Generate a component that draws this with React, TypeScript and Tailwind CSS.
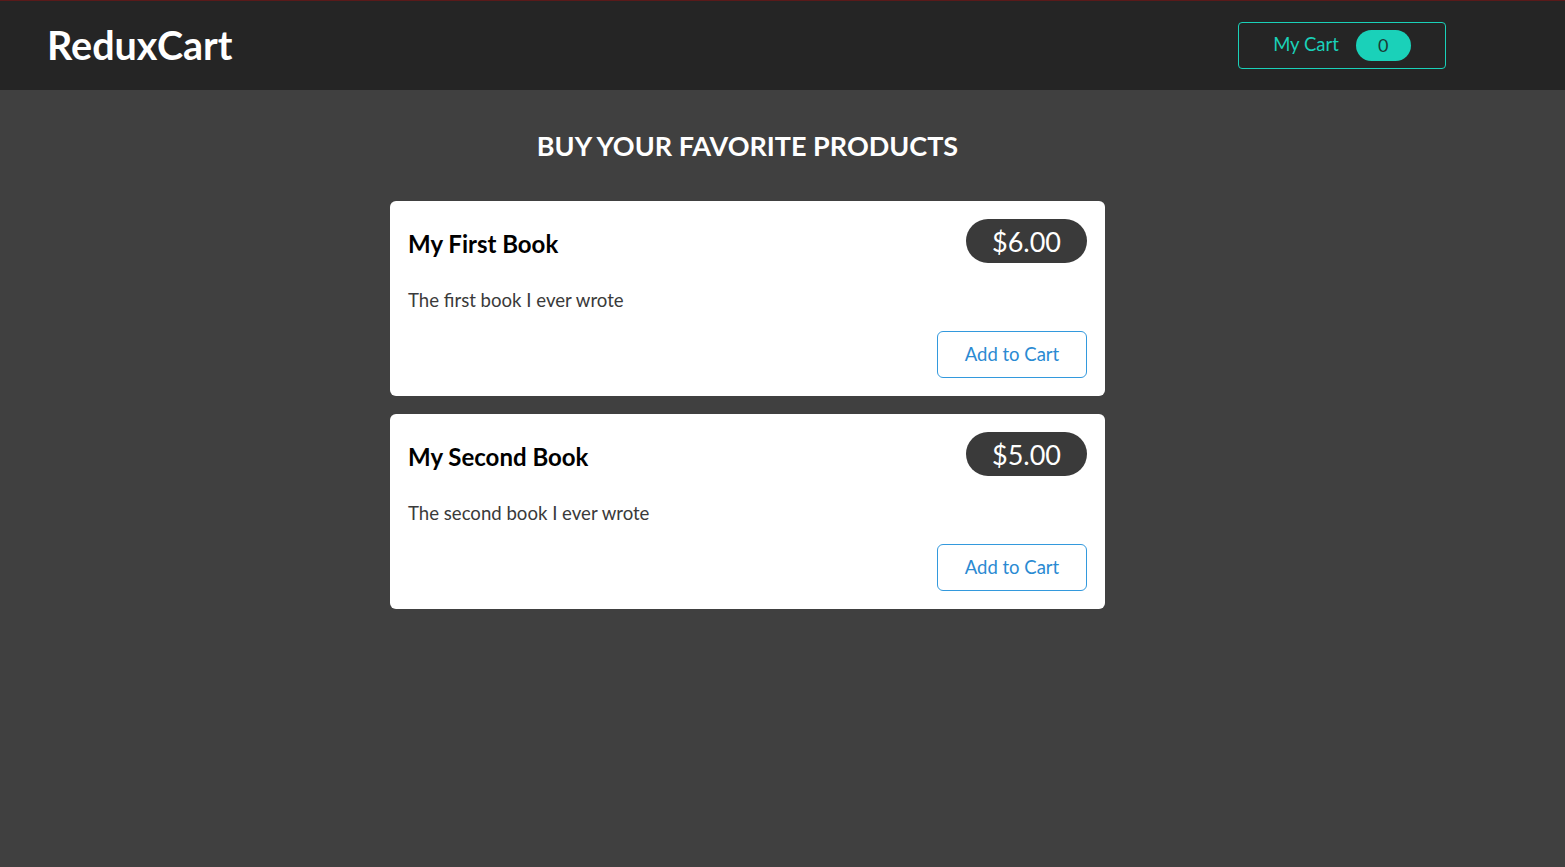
import React from "react";

type Product = {
  id: string;
  title: string;
  price: number;
  description: string;
};

const products: Product[] = [
  { id: "p1", title: "My First Book", price: 6, description: "The first book I ever wrote" },
  { id: "p2", title: "My Second Book", price: 5, description: "The second book I ever wrote" },
];

const ProductItem: React.FC<{ item: Product }> = ({ item }) => {
  return (
    <li className="bg-white rounded-md px-[18px] pt-[18px] pb-[18px] h-[195px] flex flex-col">
      <header className="flex items-center justify-between">
        <h3 className="text-[24px] font-bold text-black leading-none mt-[5px]">{item.title}</h3>
        <div className="bg-[#3a3a3a] text-white rounded-full w-[121px] h-[44px] flex items-center justify-center text-[27px] leading-none">
          ${item.price.toFixed(2)}
        </div>
      </header>
      <p className="text-[18.6px] text-[#3a3a3a] mt-[28px] leading-none">{item.description}</p>
      <div className="flex justify-end mt-auto">
        <button className="w-[150px] h-[47px] border border-[#3399dd] rounded-md text-[#2a8ad2] text-[18.5px] bg-white">
          Add to Cart
        </button>
      </div>
    </li>
  );
};

const App: React.FC = () => {
  return (
    <div
      className="min-h-screen bg-[#404040] flex flex-col"
      style={{ fontFamily: "'Source Sans Pro', Lato, 'Liberation Sans', sans-serif" }}
    >
      <header className="h-[90px] bg-[#252525] border-t border-[#5a1a1a] flex items-center justify-between pl-[47px] pr-[119px]">
        <h1 className="text-[39.5px] font-bold text-white leading-none mb-[2px]">ReduxCart</h1>
        <button className="w-[208px] h-[47px] border border-[#1ad1b9] rounded-[4px] flex items-center justify-center gap-[17px] mb-[1px]">
          <span className="text-[#1ad1b9] text-[18.5px]">My Cart</span>
          <span className="bg-[#1ad1b9] text-[#1a3a36] rounded-full w-[55px] h-[31px] flex items-center justify-center text-[18px]">
            0
          </span>
        </button>
      </header>
      <main className="flex flex-col items-center pr-[70px]">
        <h2 className="text-white font-bold text-[27px] mt-[32px] mb-[31px] leading-[48px]">
          BUY YOUR FAVORITE PRODUCTS
        </h2>
        <ul className="w-[715px] flex flex-col gap-[18px]">
          {products.map((p) => (
            <ProductItem key={p.id} item={p} />
          ))}
        </ul>
      </main>
    </div>
  );
};

export default App;
